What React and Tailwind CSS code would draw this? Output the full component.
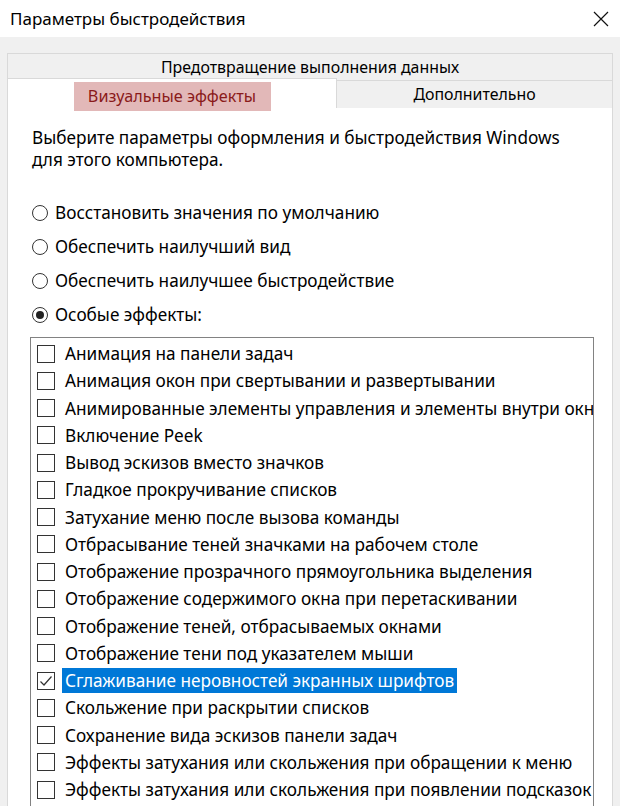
import React from "react";

const items = [
  ["Анимация на панели задач", false],
  ["Анимация окон при свертывании и развертывании", false],
  ["Анимированные элементы управления и элементы внутри окна", false],
  ["Включение Peek", false],
  ["Вывод эскизов вместо значков", false],
  ["Гладкое прокручивание списков", false],
  ["Затухание меню после вызова команды", false],
  ["Отбрасывание теней значками на рабочем столе", false],
  ["Отображение прозрачного прямоугольника выделения", false],
  ["Отображение содержимого окна при перетаскивании", false],
  ["Отображение теней, отбрасываемых окнами", false],
  ["Отображение тени под указателем мыши", false],
  ["Сглаживание неровностей экранных шрифтов", true],
  ["Скольжение при раскрытии списков", false],
  ["Сохранение вида эскизов панели задач", false],
  ["Эффекты затухания или скольжения при обращении к меню", false],
  ["Эффекты затухания или скольжения при появлении подсказок", false],
];

function Radio({ checked, label }) {
  return (
    <div className="flex items-center h-[34px] pl-[2px]">
      <div className="w-[16px] h-[16px] shrink-0 rounded-full border border-[#333] bg-white flex items-center justify-center">
        {checked && <div className="w-[8px] h-[8px] rounded-full bg-[#222]" />}
      </div>
      <span className="ml-[7px]">{label}</span>
    </div>
  );
}

function Item({ label, checked }) {
  return (
    <div className="flex items-center h-[27.25px] pl-[6px] whitespace-nowrap">
      <div className="w-[18px] h-[18px] shrink-0 border border-[#333] bg-white flex items-center justify-center">
        {checked && (
          <svg width="14" height="14" viewBox="0 0 14 14">
            <polyline points="1.5,7.5 5,11 12.5,2.5" fill="none" stroke="#333" strokeWidth="1.2" />
          </svg>
        )}
      </div>
      <span
        className={
          "ml-[7px] px-[3px] leading-[25px] " +
          (checked ? "bg-[#0078d7] text-white" : "")
        }
      >
        {label}
      </span>
    </div>
  );
}

export default function App() {
  return (
    <div className="w-[620px] h-[806px] overflow-hidden bg-[#f0f0f0] text-black font-['Noto_Sans',sans-serif] text-[17.2px]">
      <div className="h-[37px] bg-white flex items-center justify-between pl-[10px] pr-[8px]">
        <span className="text-[17px]">Параметры быстродействия</span>
        <svg width="18" height="18" viewBox="0 0 18 18" className="mr-[2px]">
          <path d="M2 2 L16 16 M16 2 L2 16" stroke="#111" strokeWidth="1.2" />
        </svg>
      </div>
      <div className="pt-[16px] pl-[7px] w-[613px]">
        <div className="h-[27px] border border-b-0 border-[#d9d9d9] flex items-center justify-center text-[15.9px] pt-[2px]">
          Предотвращение выполнения данных
        </div>
        <div className="flex items-end h-[30px] -mt-[2px]">
          <div className="w-[330px] h-[30px] bg-white border border-b-0 border-[#d9d9d9] flex items-start justify-center pt-[3px]">
            <div className="w-[197px] h-[29px] bg-[#e2b8b8] text-[#8a1a1a] text-[16.2px] flex items-center justify-center">
              Визуальные эффекты
            </div>
          </div>
          <div className="flex-1 h-[28px] border border-l-0 border-b-0 border-[#d9d9d9] flex items-center justify-center text-[15.9px]">
            Дополнительно
          </div>
        </div>
        <div className="bg-white border border-t-0 border-[#d9d9d9] h-[700px] pl-[22px] pt-[19px]">
          <div className="pl-[2px] leading-[22px]">
            <div>Выберите параметры оформления и быстродействия Windows</div>
            <div>для этого компьютера.</div>
          </div>
          <div className="mt-[25px]">
            <Radio label="Восстановить значения по умолчанию" />
            <Radio label="Обеспечить наилучший вид" />
            <Radio label="Обеспечить наилучшее быстродействие" />
            <Radio label="Особые эффекты:" checked />
          </div>
          <div className="mt-[5px] w-[564px] h-[500px] border border-[#828282] overflow-hidden pt-[2px]">
            {items.map(([l, c], i) => (
              <Item key={i} label={l} checked={c} />
            ))}
          </div>
        </div>
      </div>
    </div>
  );
}
